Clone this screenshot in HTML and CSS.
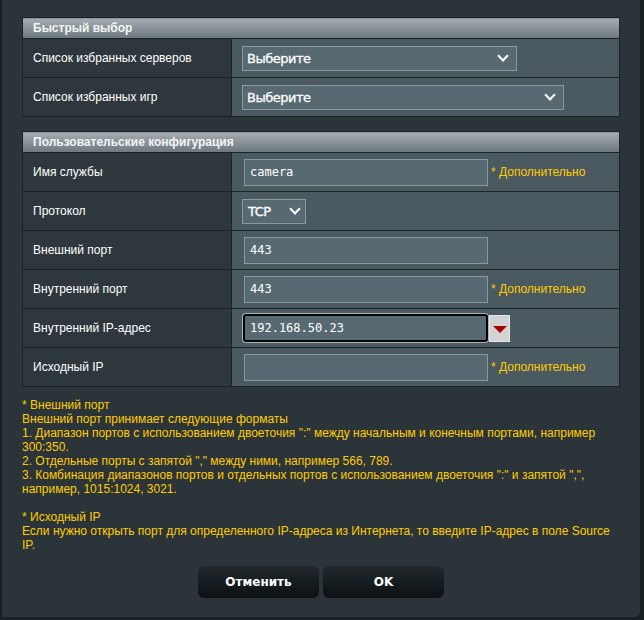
FILE: index.html
```html
<!DOCTYPE html>
<html lang="ru">
<head>
<meta charset="utf-8">
<link rel="stylesheet" href="styles.css">
</head>
<body>
<div class="dialog">
  <table class="form">
    <tr><th colspan="2">Быстрый выбор</th></tr>
    <tr>
      <td class="label">Список избранных серверов</td>
      <td class="field"><div class="select w275">Выберите<span class="chev"></span></div></td>
    </tr>
    <tr>
      <td class="label">Список избранных игр</td>
      <td class="field"><div class="select w322">Выберите<span class="chev"></span></div></td>
    </tr>
  </table>

  <table class="form second">
    <tr><th colspan="2">Пользовательские конфигурация</th></tr>
    <tr>
      <td class="label">Имя службы</td>
      <td class="field"><div class="input">camera</div><span class="hint">* Дополнительно</span></td>
    </tr>
    <tr>
      <td class="label">Протокол</td>
      <td class="field"><div class="select w64">TCP<span class="chev"></span></div></td>
    </tr>
    <tr>
      <td class="label">Внешний порт</td>
      <td class="field"><div class="input">443</div></td>
    </tr>
    <tr>
      <td class="label">Внутренний порт</td>
      <td class="field"><div class="input">443</div><span class="hint">* Дополнительно</span></td>
    </tr>
    <tr>
      <td class="label">Внутренний IP-адрес</td>
      <td class="field"><div class="input focus">192.168.50.23</div><span class="dropbtn"><span class="tri"></span></span></td>
    </tr>
    <tr>
      <td class="label">Исходный IP</td>
      <td class="field"><div class="input"></div><span class="hint">* Дополнительно</span></td>
    </tr>
  </table>

  <div class="notes">
    <p>* Внешний порт<br>Внешний порт принимает следующие форматы<br>1. Диапазон портов с использованием двоеточия ":" между начальным и конечным портами, например 300:350.<br>2. Отдельные порты с запятой "," между ними, например 566, 789.<br>3. Комбинация диапазонов портов и отдельных портов с использованием двоеточия ":" и запятой ",", например, 1015:1024, 3021.</p>
    <p>* Исходный IP<br>Если нужно открыть порт для определенного IP-адреса из Интернета, то введите IP-адрес в поле Source IP.</p>
  </div>

  <div class="buttons">
    <button class="btn">Отменить</button>
    <button class="btn">OK</button>
  </div>
</div>
</body>
</html>
```

FILE: styles.css
```css
html, body {
  margin: 0;
  padding: 0;
}
body {
  background: #1a2124;
  width: 644px;
  height: 620px;
  overflow: hidden;
  font-family: "Liberation Sans", Arial, sans-serif;
  font-size: 12px;
}
.dialog {
  margin-left: 2px;
  width: 638px;
  height: 617px;
  background: #2b3539;
  border-bottom-right-radius: 6px;
  padding: 17px 0 0 20px;
  box-sizing: border-box;
}
.form {
  width: 598px;
  border-collapse: collapse;
  border: 1px solid #1c2326;
}
.form.second {
  margin-top: 14px;
}
.form th {
  height: 20px;
  padding: 0 0 0 10px;
  text-align: left;
  font-weight: bold;
  font-size: 12px;
  color: #f2f4f5;
  background: linear-gradient(#a4adb1, #6c787d);
  border-bottom: 1px solid #1c2326;
}
.form td {
  height: 38px;
  padding: 0;
  border-top: 1px solid #1c2326;
  vertical-align: middle;
}
.form td.label {
  width: 198px;
  padding-left: 10px;
  background: #2e383c;
  color: #ffffff;
  border-right: 1px solid #1c2326;
}
.form td.field {
  background: #4a5a60;
  padding-left: 10px;
  white-space: nowrap;
}
.select {
  display: inline-flex;
  align-items: center;
  justify-content: space-between;
  box-sizing: border-box;
  height: 25px;
  padding: 0 9px 0 4px;
  background: #586a71;
  border: 1px solid #8a999e;
  color: #ffffff;
  font-family: "DejaVu Sans", Verdana, sans-serif;
  font-size: 13px;
  letter-spacing: -0.5px;
  -webkit-text-stroke: 0.3px #ffffff;
  vertical-align: middle;
}
.w275 { width: 275px; }
.w322 { width: 322px; }
.w64 { width: 64px; height: 25px; padding-left: 5px; padding-right: 6px; }
.chev {
  width: 6px;
  height: 6px;
  border-right: 2.5px solid #ffffff;
  border-bottom: 2.5px solid #ffffff;
  transform: translateY(-2px) rotate(45deg);
}
.input {
  display: inline-block;
  box-sizing: border-box;
  width: 244px;
  height: 27px;
  margin-left: 2px;
  padding: 0 0 0 5px;
  line-height: 25px;
  background: #586a71;
  border: 1px solid #8a999e;
  color: #ffffff;
  font-family: "DejaVu Sans Mono", "Liberation Mono", monospace;
  font-size: 12px;
  vertical-align: middle;
}
.input.focus {
  width: 245px;
  height: 28px;
  margin-left: 1px;
  line-height: 24px;
  border: 2px solid #050505;
  border-radius: 3px;
  box-shadow: 0 0 0 1px #a9b4b8;
}
.hint {
  margin-left: 3px;
  color: #ffcc00;
  vertical-align: middle;
}
.dropbtn {
  display: inline-flex;
  align-items: center;
  justify-content: center;
  box-sizing: border-box;
  width: 21px;
  height: 27px;
  margin-left: 1px;
  background: #d3d3d3;
  border: 1px solid #e6e6e6;
  vertical-align: middle;
}
.tri {
  width: 0;
  height: 0;
  border-left: 7px solid transparent;
  border-right: 7px solid transparent;
  border-top: 7px solid #a50000;
  margin-top: 2px;
}
.notes {
  width: 598px;
  margin-top: 11px;
  color: #ffcc00;
  font-size: 12px;
  line-height: 14px;
}
.notes p {
  margin: 0 0 14px 0;
}
.buttons {
  display: flex;
  justify-content: center;
  gap: 4px;
  width: 598px;
  margin-top: 8px;
}
.btn {
  width: 121px;
  height: 32px;
  border: none;
  border-radius: 6px;
  background: linear-gradient(#20292c, #0c1113);
  color: #ffffff;
  font-family: "DejaVu Sans", Verdana, sans-serif;
  font-weight: bold;
  font-size: 12px;
  padding: 0;
}
```
